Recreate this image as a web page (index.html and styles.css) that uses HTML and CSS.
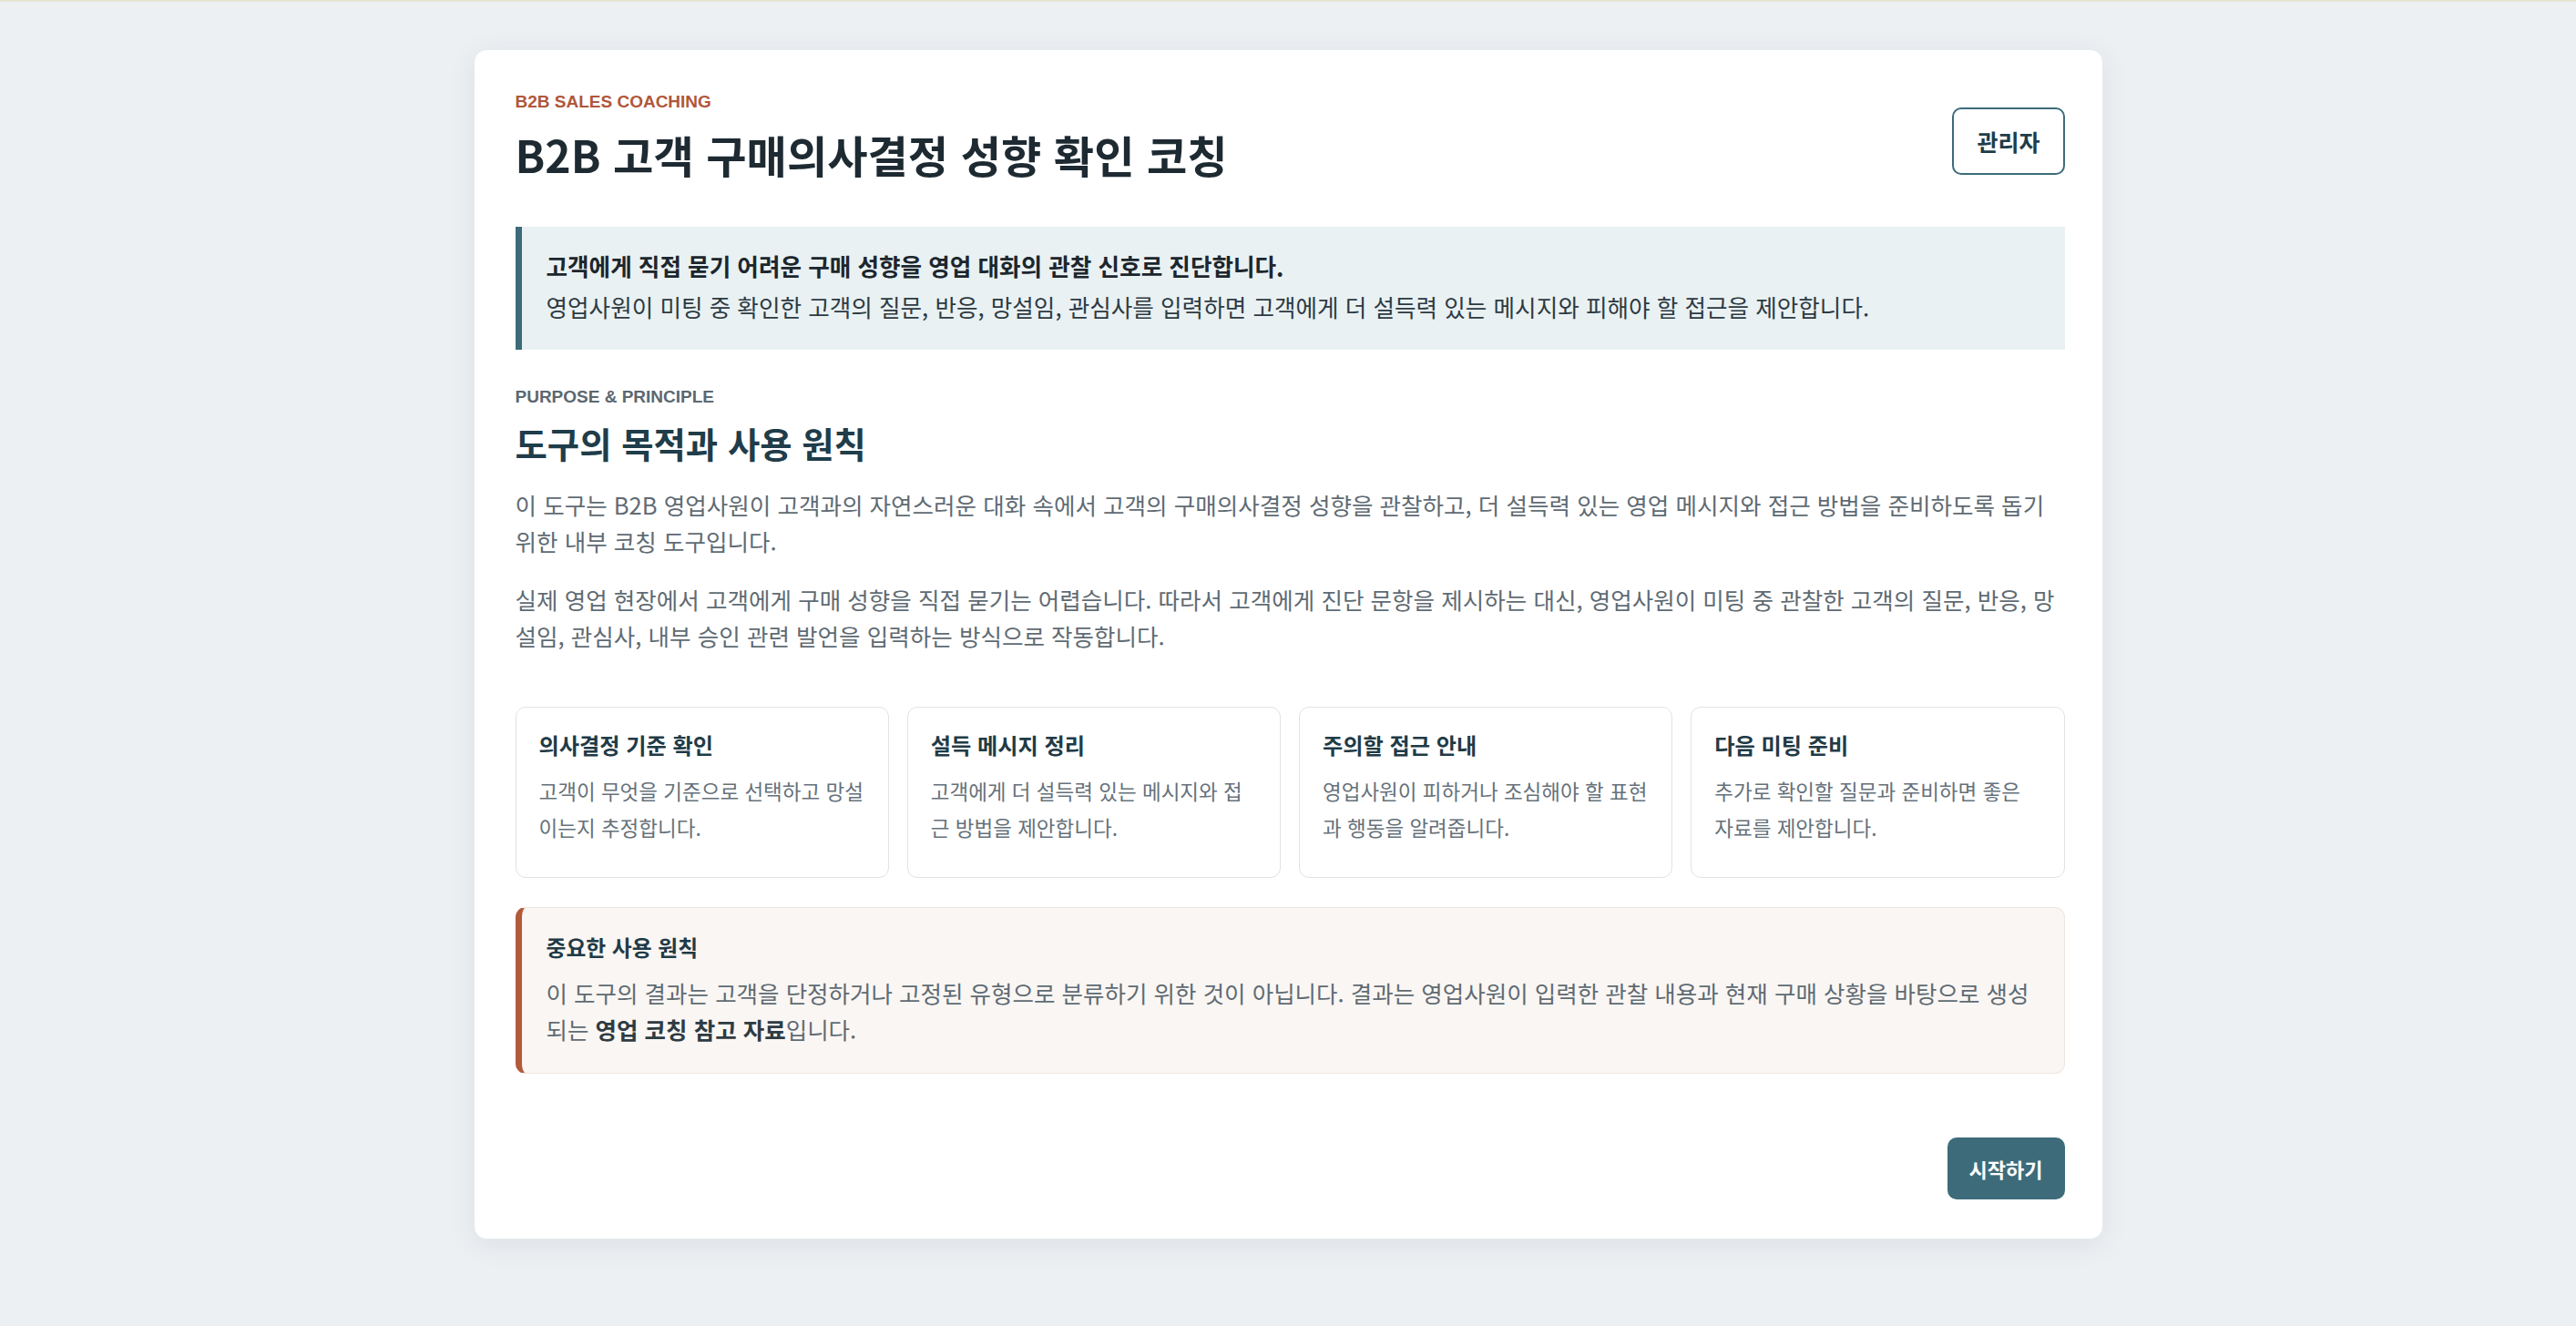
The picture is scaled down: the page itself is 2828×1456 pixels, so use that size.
FILE: index.html
```html
<!DOCTYPE html>
<html lang="ko">
<head>
<meta charset="utf-8">
<title>B2B 고객 구매의사결정 성향 확인 코칭</title>
<link rel="stylesheet" href="styles.css">
</head>
<body>
<div class="page">
  <main class="card">
    <header class="header">
      <div class="header-text">
        <div class="eyebrow">B2B SALES COACHING</div>
        <h1 class="title">B2B 고객 구매의사결정 성향 확인 코칭</h1>
      </div>
      <button class="btn-admin" type="button">관리자</button>
    </header>

    <section class="intro">
      <p class="intro-strong">고객에게 직접 묻기 어려운 구매 성향을 영업 대화의 관찰 신호로 진단합니다.</p>
      <p class="intro-text">영업사원이 미팅 중 확인한 고객의 질문, 반응, 망설임, 관심사를 입력하면 고객에게 더 설득력 있는 메시지와 피해야 할 접근을 제안합니다.</p>
    </section>

    <section class="purpose">
      <div class="section-label">PURPOSE &amp; PRINCIPLE</div>
      <h2 class="section-title">도구의 목적과 사용 원칙</h2>
      <p class="body-text">이 도구는 B2B 영업사원이 고객과의 자연스러운 대화 속에서 고객의 구매의사결정 성향을 관찰하고, 더 설득력 있는 영업 메시지와 접근 방법을 준비하도록 돕기 위한 내부 코칭 도구입니다.</p>
      <p class="body-text body-text-second">실제 영업 현장에서 고객에게 구매 성향을 직접 묻기는 어렵습니다. 따라서 고객에게 진단 문항을 제시하는 대신, 영업사원이 미팅 중 관찰한 고객의 질문, 반응, 망설임, 관심사, 내부 승인 관련 발언을 입력하는 방식으로 작동합니다.</p>
    </section>

    <section class="features">
      <div class="feature">
        <h3 class="feature-title">의사결정 기준 확인</h3>
        <p class="feature-text">고객이 무엇을 기준으로 선택하고 망설이는지 추정합니다.</p>
      </div>
      <div class="feature">
        <h3 class="feature-title">설득 메시지 정리</h3>
        <p class="feature-text">고객에게 더 설득력 있는 메시지와 접근 방법을 제안합니다.</p>
      </div>
      <div class="feature">
        <h3 class="feature-title">주의할 접근 안내</h3>
        <p class="feature-text">영업사원이 피하거나 조심해야 할 표현과 행동을 알려줍니다.</p>
      </div>
      <div class="feature">
        <h3 class="feature-title">다음 미팅 준비</h3>
        <p class="feature-text">추가로 확인할 질문과 준비하면 좋은 자료를 제안합니다.</p>
      </div>
    </section>

    <section class="notice">
      <h3 class="notice-title">중요한 사용 원칙</h3>
      <p class="notice-text">이 도구의 결과는 고객을 단정하거나 고정된 유형으로 분류하기 위한 것이 아닙니다. 결과는 영업사원이 입력한 관찰 내용과 현재 구매 상황을 바탕으로 생성되는 <strong>영업 코칭 참고 자료</strong>입니다.</p>
    </section>

    <div class="actions">
      <button class="btn-start" type="button">시작하기</button>
    </div>
  </main>
</div>
</body>
</html>
```

FILE: styles.css
```css
* {
  box-sizing: border-box;
}

html, body {
  margin: 0;
  padding: 0;
}

body {
  background: #edf0f3;
  border-top: 2px solid #e6e4d2;
  font-family: "Noto Sans CJK KR", "Noto Sans", sans-serif;
  color: #1e2b33;
  min-height: 1456px;
}

.page {
  padding: 52px 0 60px;
}

.card {
  width: 1789px;
  margin: 0 auto;
  background: #ffffff;
  border-radius: 14px;
  border: 1px solid #e6eaed;
  box-shadow: 0 6px 30px rgba(30, 50, 70, 0.08);
  padding: 45px 41px 43px 45px;
}

.header {
  display: flex;
  justify-content: space-between;
  align-items: flex-start;
}

.eyebrow {
  font-family: "Liberation Sans", "Noto Sans CJK KR", sans-serif;
  font-size: 19px;
  line-height: 23px;
  font-weight: 700;
  color: #b0573a;
  margin-bottom: 17px;
}

.title {
  margin: 0;
  font-size: 48.2px;
  line-height: 59px;
  font-weight: 700;
  color: #1e2a32;
}

.btn-admin {
  margin-top: 18px;
  font-family: inherit;
  font-size: 25px;
  line-height: 30px;
  font-weight: 700;
  color: #1f3d4a;
  background: #ffffff;
  border: 2px solid #3d6b7a;
  border-radius: 10px;
  padding: 20px 25px;
}

.intro {
  margin-top: 50px;
  background: #e9f1f3;
  border-left: 7px solid #3d6b7a;
  padding: 23px 28px 27px 27px;
}

.intro p {
  margin: 0;
  font-size: 25.6px;
  line-height: 40px;
}

.intro-strong {
  font-weight: 700;
  color: #1c262d;
  margin-bottom: 5px !important;
}

.intro-text {
  color: #2d3a42;
}

.purpose {
  margin-top: 41px;
}

.section-label {
  font-family: "Liberation Sans", "Noto Sans CJK KR", sans-serif;
  font-size: 19px;
  line-height: 22px;
  font-weight: 700;
  color: #5c6870;
}

.section-title {
  margin: 12px 0 0;
  font-size: 38.4px;
  line-height: 55px;
  font-weight: 700;
  color: #1f3d4a;
}

.body-text {
  margin: 20px 0 0;
  font-size: 25.55px;
  line-height: 39.5px;
  color: #5f6b73;
}

.body-text-second {
  margin-top: 25px;
}

.features {
  margin-top: 59px;
  display: grid;
  grid-template-columns: repeat(4, 1fr);
  gap: 20px;
}

.feature {
  border: 1px solid #dfe4e7;
  border-radius: 11px;
  padding: 25px 25px 35px 25px;
  background: #ffffff;
}

.feature-title {
  margin: 0;
  font-size: 24.2px;
  line-height: 32px;
  font-weight: 700;
  color: #1f3b47;
}

.feature-text {
  margin: 14px 0 0;
  font-size: 22.5px;
  line-height: 40px;
  color: #66717a;
}

.notice {
  margin-top: 32px;
  background: #faf6f3;
  border: 1px solid #efe6e0;
  border-left: 7px solid #b35a3a;
  border-radius: 11px;
  padding: 27px 17px 28px 27px;
}

.notice-title {
  margin: 0;
  font-size: 23.8px;
  line-height: 32px;
  font-weight: 700;
  color: #1f3b47;
}

.notice-text {
  margin: 14px 0 0;
  font-size: 25.5px;
  line-height: 40px;
  color: #5f6b73;
}

.notice-text strong {
  color: #2e3b43;
  font-weight: 700;
}

.actions {
  margin-top: 70px;
  display: flex;
  justify-content: flex-end;
}

.btn-start {
  font-family: inherit;
  font-size: 22px;
  line-height: 28px;
  font-weight: 700;
  color: #ffffff;
  background: #3d6b7a;
  border: none;
  border-radius: 10px;
  padding: 20px 24px;
}
```
